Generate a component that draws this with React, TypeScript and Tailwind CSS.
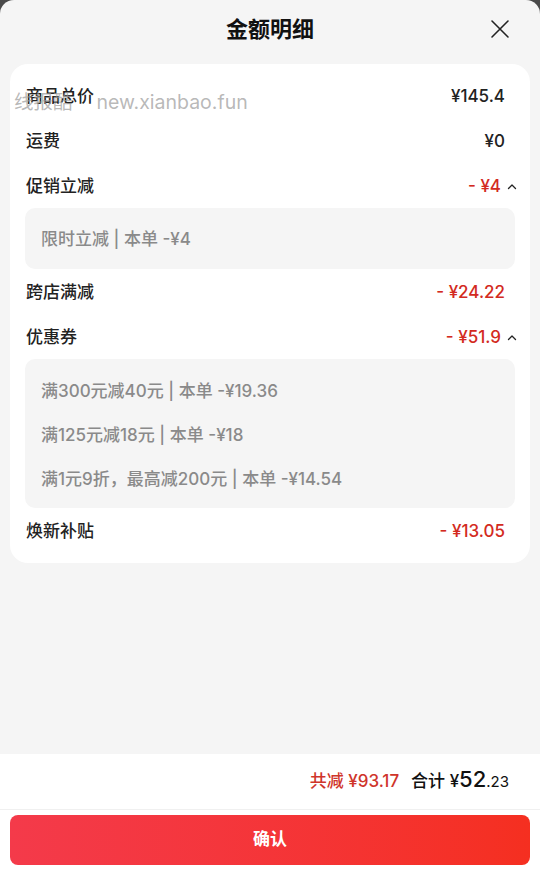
import React from "react"

const font = { fontFamily: 'Inter, "Noto Sans CJK SC", "Noto Sans", sans-serif' }

function ChevronUp() {
    return (
        <svg width="10" height="10" viewBox="0 0 10 10" className="ml-[6px]">
            <path d="M1.5 6.5 L5 3 L8.5 6.5" fill="none" stroke="#222" strokeWidth="1.3" strokeLinecap="round" strokeLinejoin="round" />
        </svg>
    )
}

function Row({ label, value, red, chevron }: { label: string; value: string; red?: boolean; chevron?: boolean }) {
    return (
        <div className={`flex h-[45px] items-center justify-between pl-4 pt-[2px] ${chevron ? "pr-[13px]" : "pr-[25px]"}`}>
            <span className="text-[17px] font-medium text-[#222]">{label}</span>
            <span className="flex items-center">
                <span className={`text-[17px] font-medium ${red ? "text-[#d32a21]" : "text-[#222]"}`}>{value}</span>
                {chevron && <ChevronUp />}
            </span>
        </div>
    )
}

function SubBox({ lines, className }: { lines: string[]; className?: string }) {
    return (
        <div className={`mx-[15px] rounded-[10px] bg-[#f5f5f5] px-4 ${className ?? ""}`}>
            {lines.map((l) => (
                <div key={l} className="flex h-[44px] items-center pt-[2px] text-[17px] font-medium text-[#8a8a8a]">
                    {l}
                </div>
            ))}
        </div>
    )
}

export default function App() {
    return (
        <div className="h-[877px] w-[540px] bg-[#4a4a4a]" style={font}>
            <div className="relative flex h-full flex-col overflow-hidden rounded-t-[14px] bg-[#f5f5f5]">
                <header className="relative flex h-[64px] items-center justify-center pb-[6px]">
                    <h1 className="text-[22px] font-bold text-[#111]">金额明细</h1>
                    <svg width="20" height="20" viewBox="0 0 20 20" className="absolute left-[490px] top-[19px]">
                        <path d="M2 2 L18 18 M18 2 L2 18" stroke="#222" strokeWidth="1.6" strokeLinecap="round" />
                    </svg>
                </header>

                <section className="mx-[10px] rounded-[18px] bg-white pb-[10px] pt-[9px]">
                    <Row label="商品总价" value="¥145.4" />
                    <Row label="运费" value="¥0" />
                    <Row label="促销立减" value="- ¥4" red chevron />
                    <SubBox lines={["限时立减 | 本单 -¥4"]} className="flex h-[61px] items-center" />
                    <Row label="跨店满减" value="- ¥24.22" red />
                    <Row label="优惠券" value="- ¥51.9" red chevron />
                    <SubBox
                        lines={["满300元减40元 | 本单 -¥19.36", "满125元减18元 | 本单 -¥18", "满1元9折，最高减200元 | 本单 -¥14.54"]}
                        className="pb-[7px] pt-[10px]"
                    />
                    <Row label="焕新补贴" value="- ¥13.05" red />
                </section>

                <div className="flex-1" />

                <footer className="h-[123px] bg-white">
                    <div className="flex h-[56px] items-center justify-end gap-[12px] border-b border-[#f0f0f0] pr-[31px]">
                        <span className="text-[17px] font-medium text-[#cf352b]">共减 ¥93.17</span>
                        <span className="flex items-baseline text-[#111]">
                            <span className="text-[17px] font-medium">合计 ¥</span>
                            <span className="text-[22px] font-medium leading-none">52</span>
                            <span className="text-[15px]">.23</span>
                        </span>
                    </div>
                    <div className="px-[10px] pt-[5px]">
                        <button className="flex h-[50px] w-full items-center justify-center rounded-[8px] bg-gradient-to-r from-[#f43a4a] to-[#f52f20] text-[17px] font-bold text-white">
                            确认
                        </button>
                    </div>
                </footer>

                <div className="pointer-events-none absolute left-[14px] top-[88px] flex gap-[24px] text-[19.5px] text-[#9a9a9a]/70">
                    <span>线报酷</span>
                    <span>new.xianbao.fun</span>
                </div>
            </div>
        </div>
    )
}
